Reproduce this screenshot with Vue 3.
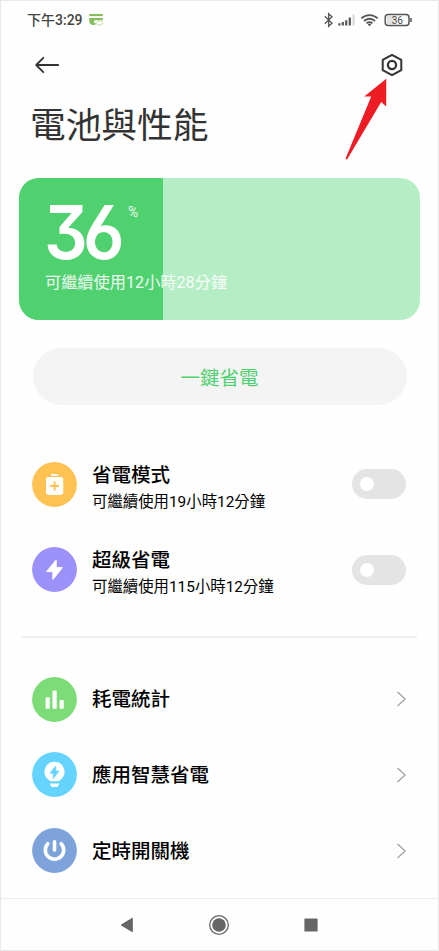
<script setup>
import { ref } from 'vue'

const level = ref(36)
const modes = ref([
  { id: 'saver', title: '省電模式', note: '可繼續使用19小時12分鐘', color: '#fec252', on: false },
  { id: 'ultra', title: '超級省電', note: '可繼續使用115小時12分鐘', color: '#9c91f9', on: false },
])
const links = [
  { id: 'stats', title: '耗電統計', color: '#7edc78' },
  { id: 'smart', title: '應用智慧省電', color: '#64d3fe' },
  { id: 'timer', title: '定時開關機', color: '#7ea3da' },
]
</script>

<template>
  <div class="screen">
    <div class="status">
      <span class="clock">下午3:29</span>
      <svg class="notice" width="15" height="12" viewBox="0 0 15 12">
        <path d="M.3 0h13.5v2.1H.3z" fill="#86bd5b" />
        <path d="M.3 4h13.5v2.2H5.1v2.5l1.8.5-.9 1.8H4Q.3 10.5.3 7z" fill="#86bd5b" />
        <path d="M8.2 10.8a1.5 1.5 0 0 1 0-2.6 2 2 0 0 1 3.7-.5 1.6 1.6 0 0 1 .7 3.1z" fill="#fff" stroke="#a9cf8a" stroke-width=".7" />
      </svg>
      <svg class="tray" width="92" height="16" viewBox="0 0 92 16" fill="none">
        <path d="M.8 4.3 8 11.3 4.6 14.3V1.7L8 4.8.8 11.7" stroke="#555" stroke-width="1.3" />
        <g stroke-width="2.2">
          <path d="M15.4 13.5v-2.3M18.8 13.5V10M22.2 13.5V8.2M25.8 13.5V5.4" stroke="#555" />
          <path d="M29.6 13.5V2.4" stroke="#d8d8d8" />
        </g>
        <g stroke="#555" stroke-width="1.8">
          <path d="M37.4 6.4a11.5 11.5 0 0 1 16.2 0M40 9a7.8 7.8 0 0 1 11 0M42.6 11.4a4.1 4.1 0 0 1 5.8 0" />
        </g>
        <path d="m43.7 12.4 1.8 1.8 1.8-1.8a2.6 2.6 0 0 0-3.6 0z" fill="#555" />
        <rect x="62.8" y="4" width="8" height="8" fill="#e1e1e1" />
        <rect x="61.2" y="2.5" width="23.8" height="11" rx="3" stroke="#555" stroke-width="1.5" />
        <path d="M87 6v4" stroke="#555" stroke-width="1.5" />
        <text x="73.3" y="11.5" text-anchor="middle" class="tray-level">{{ level }}</text>
      </svg>
    </div>

    <header class="bar">
      <svg width="26" height="20" viewBox="0 0 26 20" fill="none" stroke="#333" stroke-width="1.8" stroke-linecap="round" stroke-linejoin="round">
        <path d="M24.2 10H2.2M9.3 2.8 2.2 10l7.1 7.2" />
      </svg>
      <svg width="22" height="24" viewBox="0 0 22 24" fill="none" stroke="#333" stroke-width="2" stroke-linejoin="round">
        <path d="M11 1.8 20.3 6.8v10.4L11 22.2 1.7 17.2V6.8z" />
        <circle cx="11" cy="12" r="4.1" stroke-width="2.2" />
      </svg>
      <svg class="pointer" width="44" height="84" viewBox="0 0 44 84">
        <path d="M41.3.8 41.2 28.6 36.2 24 2.2 81.2Q.8 82 .8 80L26.2 18.6 19.2 18.4z" fill="#ee1c25" />
      </svg>
    </header>

    <h1>電池與性能</h1>

    <section class="battery">
      <div class="charge" :style="{ width: level + '%' }"></div>
      <div class="reading">
        <div class="figure"><span class="number">{{ level }}</span><span class="percent">%</span></div>
        <p>可繼續使用12小時28分鐘</p>
      </div>
    </section>

    <button class="quick">一鍵省電</button>

    <ul class="modes">
      <li v-for="m in modes" :key="m.id">
        <svg class="disc" viewBox="0 0 45 45">
          <circle cx="22.5" cy="22.5" r="22.4" :fill="m.color" />
          <g v-if="m.id === 'saver'">
            <rect x="19" y="12" width="7.4" height="1.8" rx=".4" fill="#fff" />
            <rect x="14" y="15.1" width="17.3" height="17.8" rx="2.4" fill="#fff" />
            <path d="M22.6 19.6v9M18.1 24.1h9" :stroke="m.color" stroke-width="2" />
          </g>
          <path v-else d="M24.2 12.9v7.7h6.2L20.9 32.5v-7.9h-6.3z" fill="#fff" stroke="#fff" stroke-width="1" stroke-linejoin="round" />
        </svg>
        <div class="label">
          <h2>{{ m.title }}</h2>
          <p>{{ m.note }}</p>
        </div>
        <button class="toggle" :class="{ on: m.on }" @click="m.on = !m.on"><i></i></button>
      </li>
    </ul>

    <hr />

    <ul class="links">
      <li v-for="l in links" :key="l.id">
        <svg class="disc" viewBox="0 0 45 45">
          <circle cx="22.5" cy="22.5" r="22.4" :fill="l.color" />
          <g v-if="l.id === 'stats'" fill="#fff">
            <rect x="13.6" y="20.2" width="4.2" height="11.6" rx="1" />
            <rect x="20.5" y="13.6" width="4.2" height="18.2" rx="1" />
            <rect x="27.6" y="22.9" width="4.2" height="8.9" rx="1" />
          </g>
          <g v-else-if="l.id === 'smart'">
            <path d="M22.5 9.8a10 10 0 0 1 5.7 18.2Q27 29.2 25.6 29.2h-6.2Q18 29.2 16.8 28A10 10 0 0 1 22.5 9.8z" fill="#fff" />
            <path d="M23.8 13.8v5.1h3.4l-6 7.8v-5.4h-3.4z" :fill="l.color" stroke="#64d3fe" stroke-width=".5" stroke-linejoin="round" />
            <path d="M17.9 31.4h9.3q-.7 3.7-3.3 3.7h-2.7q-2.6 0-3.3-3.7z" fill="#fff" />
          </g>
          <g v-else fill="none" stroke="#fff" stroke-width="3.6" stroke-linecap="round">
            <path d="M22.5 13.7v8.3" />
            <path d="M15.8 15.7a9.2 9.2 0 1 0 13.4 0" />
          </g>
        </svg>
        <h2>{{ l.title }}</h2>
        <svg class="chevron" width="11" height="18" viewBox="0 0 11 18" fill="none" stroke="#a6a6a6" stroke-width="1.4">
          <path d="m1.5 1.9 7.6 7.1-7.6 7.1" />
        </svg>
      </li>
    </ul>

    <nav>
      <svg width="14" height="16" viewBox="0 0 14 16"><path d="M12.3 1.3v13.4L1.2 8z" fill="#666" stroke="#666" stroke-linejoin="round" /></svg>
      <svg width="20" height="20" viewBox="0 0 20 20"><circle cx="10" cy="10" r="9.3" fill="none" stroke="#666" stroke-width="1.3" /><circle cx="10" cy="10" r="6.8" fill="#666" /></svg>
      <svg width="14" height="14" viewBox="0 0 14 14"><rect x=".4" y=".4" width="13.2" height="13.2" rx=".6" fill="#666" /></svg>
    </nav>
  </div>
</template>

<style>
body {
  margin: 0;
  background: #fff;
}
</style>

<style scoped>
.screen {
  box-sizing: border-box;
  width: 439px;
  height: 951px;
  border: 1px solid #e9e9e9;
  background: #fefefe;
  overflow: hidden;
  display: flex;
  flex-direction: column;
  font-family: Roboto, 'Noto Sans CJK TC', sans-serif;
  color: #000;
}
h1, h2, p, ul {
  margin: 0;
  padding: 0;
  list-style: none;
  white-space: nowrap;
}
button {
  border: 0;
  padding: 0;
  font-family: inherit;
}
svg {
  display: block;
  flex: none;
}
.status {
  height: 38px;
  padding: 0 22px 0 26px;
  display: flex;
  align-items: center;
  flex: none;
}
.clock {
  font-size: 14px;
  font-weight: 500;
  line-height: 18px;
  color: #444;
}
.notice {
  margin-left: 6px;
}
.tray {
  margin-left: auto;
}
.tray-level {
  font-size: 10px;
  fill: #444;
}
.bar {
  position: relative;
  height: 52px;
  padding: 0 35px 0 33px;
  display: flex;
  align-items: center;
  justify-content: space-between;
  flex: none;
}
.pointer {
  position: absolute;
  left: 344px;
  top: 39px;
}
h1 {
  height: 71px;
  padding-left: 29px;
  margin-bottom: 15.7px;
  font-size: 35.7px;
  line-height: 71px;
  font-weight: 400;
  color: #333;
  flex: none;
}
.battery {
  height: 142.3px;
  margin: 0 18px;
  border-radius: 20px;
  background: #b5eec5;
  display: grid;
  overflow: hidden;
  flex: none;
}
.charge, .reading {
  grid-area: 1 / 1;
}
.charge {
  background: #50d16f;
}
.reading {
  padding: 17px 0 0 25px;
  color: #fff;
}
.figure {
  height: 75px;
  display: flex;
  align-items: flex-start;
}
.number {
  width: 82px;
  font-family: Inter, sans-serif;
  font-feature-settings: 'cv09' 1, 'ss01' 1, 'cv03' 1;
  font-size: 74px;
  font-weight: 600;
  line-height: 74px;
  letter-spacing: -5.2px;
  transform: scaleX(.93);
  transform-origin: left;
}
.percent {
  margin: 9px 0 0 2px;
  font-size: 14px;
  line-height: 16px;
  opacity: .9;
}
.reading p {
  padding-left: 1px;
  font-size: 16.2px;
  line-height: 26px;
  opacity: .9;
}
.quick {
  height: 57px;
  margin: 28px 31.5px 0;
  border-radius: 29px;
  background: #f4f4f4;
  color: #50d16f;
  font-size: 19.5px;
  flex: none;
}
.modes {
  padding: 36.8px 32px 0 31.4px;
}
li {
  display: flex;
  align-items: center;
}
.modes li {
  height: 85.3px;
}
.disc {
  width: 45px;
  height: 45px;
  margin-right: 14.6px;
}
.label {
  flex: 1;
  padding-top: 7px;
}
h2 {
  font-size: 19.5px;
  line-height: 28px;
  font-weight: 500;
}
.label p {
  font-size: 15.4px;
  line-height: 24px;
}
.toggle {
  width: 54px;
  height: 30px;
  padding: 0 8px;
  border-radius: 15px;
  background: #e4e4e4;
  display: flex;
  align-items: center;
}
.toggle i {
  width: 14px;
  height: 14px;
  border-radius: 50%;
  background: #fff;
}
.toggle.on {
  background: #50d16f;
  justify-content: flex-end;
}
hr {
  width: 395px;
  height: 2px;
  margin: 23.2px 0 0 21px;
  border: 0;
  background: #efefef;
  flex: none;
}
.links {
  flex: 1;
  padding: 24px 31px 0 31.4px;
}
.links li {
  height: 75.6px;
}
.links h2 {
  padding-top: 2px;
}
.chevron {
  margin-left: auto;
}
nav {
  height: 51px;
  border-top: 1px solid #ececec;
  padding: 0 120px 0 119px;
  display: flex;
  align-items: center;
  justify-content: space-between;
  flex: none;
}
</style>
